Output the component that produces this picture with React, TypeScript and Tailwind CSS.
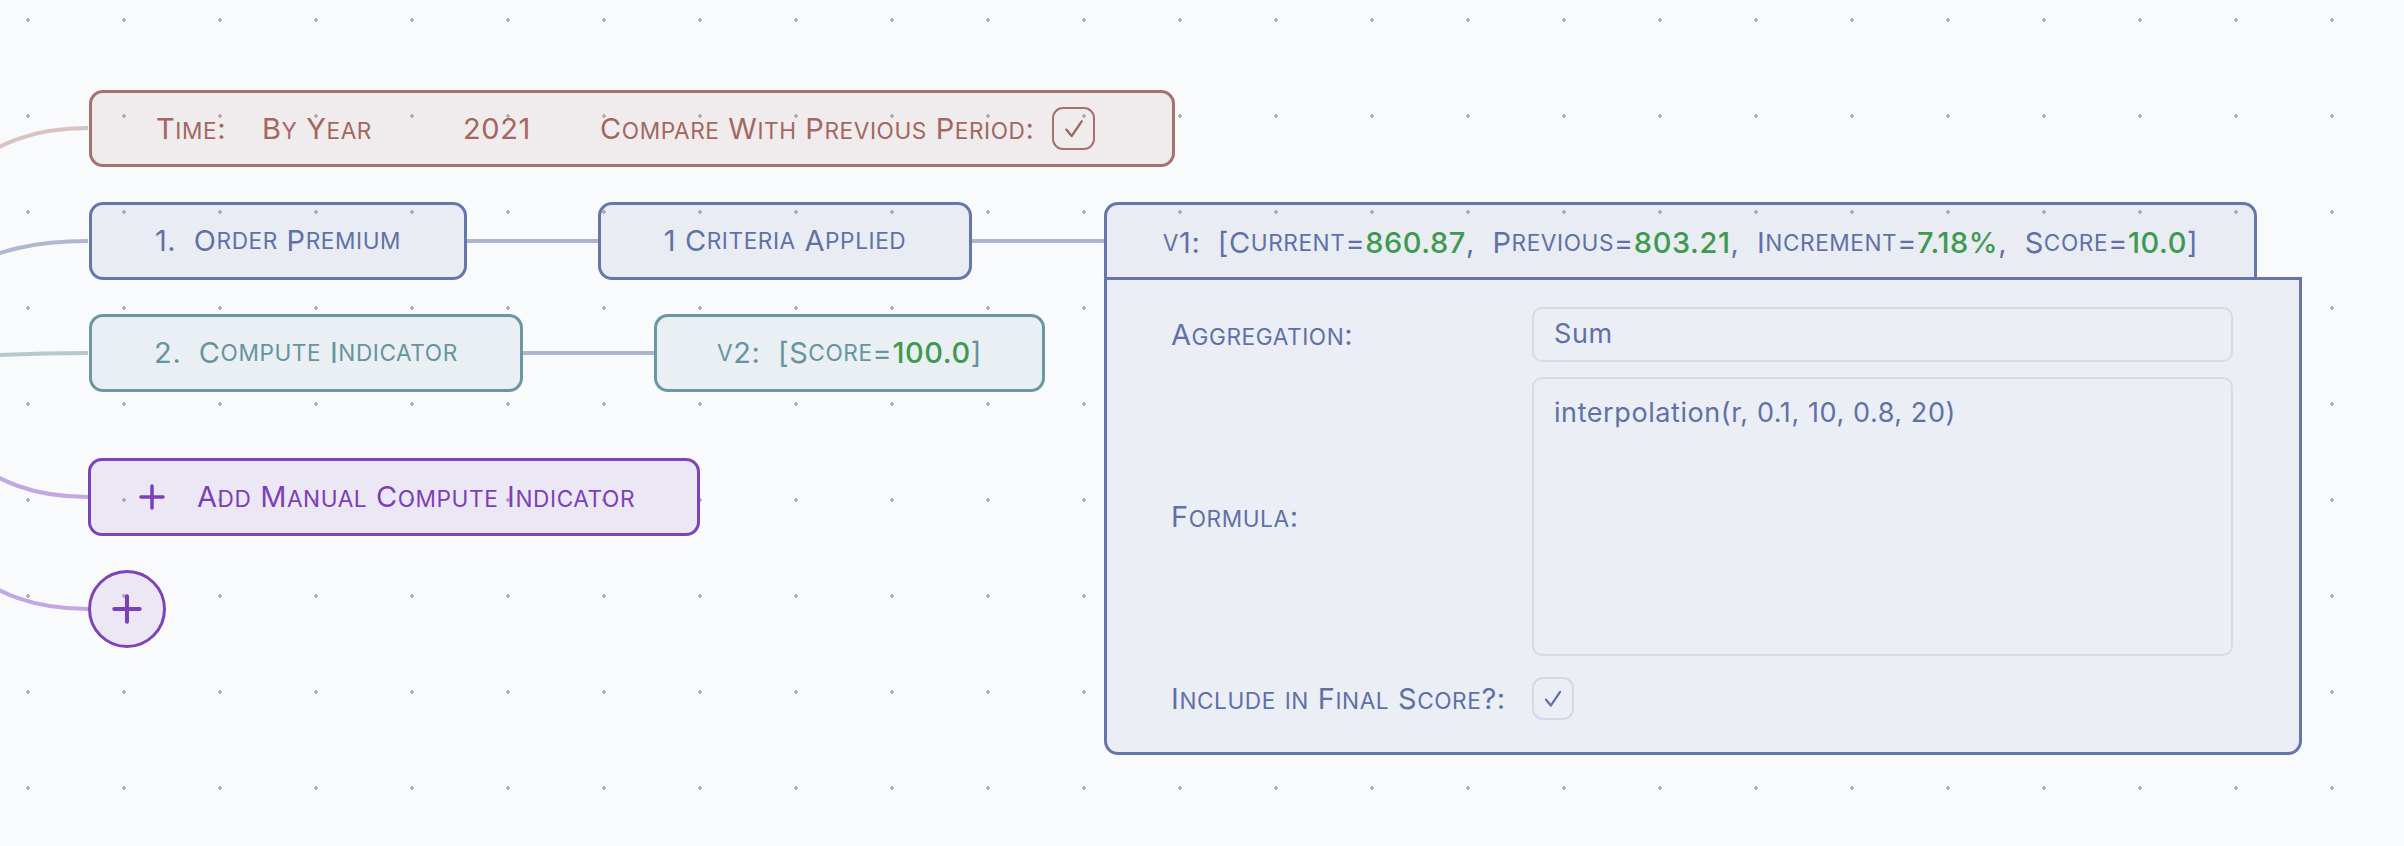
import React from "react";

const FONT = "font-['Inter','Noto_Sans',sans-serif]";

// fake small caps: lowercase runs get uppercased at a smaller size
function SmallCaps({ text }: { text: string }) {
  const parts = text.split(/([a-z]+)/);
  return (
    <>
      {parts.map((p, i) =>
        /^[a-z]+$/.test(p) ? (
          <span key={i} className="text-[0.78em] uppercase">
            {p}
          </span>
        ) : (
          <span key={i}>{p}</span>
        )
      )}
    </>
  );
}

const Green = ({ children }: { children: React.ReactNode }) => (
  <span className="font-medium text-[#3e9a4f]">{children}</span>
);

const Check = ({ color, size = 22 }: { color: string; size?: number }) => (
  <svg width={size} height={size} viewBox="0 0 22 22" fill="none">
    <polyline points="4.5,11.5 9,17 17.5,4.5" stroke={color} strokeWidth="2" strokeLinecap="round" strokeLinejoin="round" />
  </svg>
);

const Plus = ({ size = 26 }: { size?: number }) => (
  <svg width={size} height={size} viewBox="0 0 26 26" fill="none">
    <path d="M13 2v22M2 13h22" stroke="#7b40b8" strokeWidth="3.5" strokeLinecap="round" />
  </svg>
);

function Edges() {
  return (
    <svg className="absolute inset-0" width="2404" height="846" fill="none">
      <path d="M-150 199 C-31 199 -31 128 88 128" stroke="#d8c3c0" strokeWidth="4" />
      <path d="M-150 287 C-31 287 -31 241 88 241" stroke="#aeb8d1" strokeWidth="4" />
      <path d="M-150 360 C-31 360 -31 353 88 353" stroke="#b5c9d0" strokeWidth="4" />
      <path d="M-150 425 C-31 425 -31 497 88 497" stroke="#c4a6e2" strokeWidth="4" />
      <path d="M-150 538 C-31 538 -31 609 88 609" stroke="#c4a6e2" strokeWidth="4" />
      <path d="M466 241 L598 241" stroke="#abb5ce" strokeWidth="4" />
      <path d="M971 241 L1104 241" stroke="#abb5ce" strokeWidth="4" />
      <path d="M522 353 L654 353" stroke="#abb5ce" strokeWidth="4" />
    </svg>
  );
}

function TimeNode() {
  return (
    <div className="absolute left-[89px] top-[90px] flex h-[77px] w-[1086px] items-center rounded-[14px] border-[3px] border-[#a5736d] bg-[#a5736d]/10 pl-[64px] text-[29px] tracking-[0.02em] text-[#a3675f]">
      <span className="w-[106px] shrink-0"><SmallCaps text="Time:" /></span>
      <span className="w-[201px] shrink-0"><SmallCaps text="By Year" /></span>
      <span className="w-[137px] shrink-0">2021</span>
      <span><SmallCaps text="Compare With Previous Period:" /></span>
      <span className="ml-[18px] flex h-[43px] w-[43px] items-center justify-center rounded-[11px] border-2 border-[#a5736d]">
        <Check color="#a3675f" size={26} />
      </span>
    </div>
  );
}

function Node({ cls, children }: { cls: string; children: React.ReactNode }) {
  return (
    <div className={`absolute flex h-[78px] items-center justify-center whitespace-pre rounded-[14px] border-[3px] text-[29px] tracking-[0.02em] ${cls}`}>
      {children}
    </div>
  );
}

function Panel() {
  return (
    <div className="absolute left-[1104px] top-[202px] flex flex-col text-[29px] tracking-[0.02em] text-[#5f71a5]">
      <div className="relative z-10 -mb-[3px] flex h-[78px] w-[1153px] items-center justify-center whitespace-pre rounded-t-[14px] border-[3px] border-b-0 border-[#6577a9] bg-[#6577a9]/10">
        <SmallCaps text="v1:  [Current=" />
        <Green>860.87</Green>
        <SmallCaps text=",  Previous=" />
        <Green>803.21</Green>
        <SmallCaps text=",  Increment=" />
        <Green>7.18%</Green>
        <SmallCaps text=",  Score=" />
        <Green>10.0</Green>
        <span>]</span>
      </div>
      <div className="flex h-[478px] w-[1198px] flex-col rounded-b-[14px] border-[3px] border-[#6577a9] bg-[#ebeef5] pl-[64px] pr-[66px] pt-[27px]">
        <div className="flex items-center">
          <div className="w-[361px]"><SmallCaps text="Aggregation:" /></div>
          <div className="flex h-[55px] flex-1 items-center rounded-[10px] border-2 border-[#d5dce6] px-[20px] text-[27px]">
            Sum
          </div>
        </div>
        <div className="mt-[15px] flex items-center">
          <div className="w-[361px]"><SmallCaps text="Formula:" /></div>
          <div className="h-[279px] flex-1 rounded-[10px] border-2 border-[#d5dce6] px-[20px] pt-[14px] text-[27px] leading-[1.5]">
            interpolation(r, 0.1, 10, 0.8, 20)
          </div>
        </div>
        <div className="mt-[21px] flex items-center">
          <div className="w-[361px]"><SmallCaps text="Include in Final Score?:" /></div>
          <div className="flex h-[43px] w-[42px] items-center justify-center rounded-[11px] border-2 border-[#d3d9e4]">
            <Check color="#5f71a5" size={24} />
          </div>
        </div>
      </div>
    </div>
  );
}

export default function App() {
  return (
    <div className={`relative h-[846px] w-[2404px] overflow-hidden bg-[#f9fafc] ${FONT}`}>
      <div className="absolute inset-0 [background-image:radial-gradient(circle,#b4b5b9_1.6px,transparent_2px)] [background-size:96px_96px] [background-position:-20px_-28px]" />
      <Edges />
      <TimeNode />

      <Node cls="left-[89px] top-[202px] w-[378px] border-[#6577a9] bg-[#6577a9]/10 text-[#5f71a5]">
        <SmallCaps text="1.  Order Premium" />
      </Node>
      <Node cls="left-[598px] top-[202px] w-[374px] border-[#6577a9] bg-[#6577a9]/10 text-[#5f71a5]">
        <SmallCaps text="1 Criteria Applied" />
      </Node>

      <Node cls="left-[89px] top-[314px] w-[434px] border-[#6b97a3] bg-[#6b97a3]/10 text-[#6694a0]">
        <SmallCaps text="2.  Compute Indicator" />
      </Node>
      <Node cls="left-[654px] top-[314px] w-[391px] border-[#6b97a3] bg-[#6b97a3]/10 text-[#6694a0]">
        <SmallCaps text="v2:  [Score=" />
        <Green>100.0</Green>
        <span>]</span>
      </Node>

      <div className="absolute left-[88px] top-[458px] flex h-[78px] w-[612px] items-center rounded-[14px] border-[3px] border-[#7d44b8] bg-[#7d44b8]/10 pl-[48px] text-[29px] tracking-[0.02em] text-[#7b40b8]">
        <Plus />
        <span className="ml-[32px]"><SmallCaps text="Add Manual Compute Indicator" /></span>
      </div>

      <div className="absolute left-[88px] top-[570px] flex h-[78px] w-[78px] items-center justify-center rounded-full border-[3px] border-[#7d44b8] bg-[#7d44b8]/10">
        <Plus size={30} />
      </div>

      <Panel />
    </div>
  );
}
